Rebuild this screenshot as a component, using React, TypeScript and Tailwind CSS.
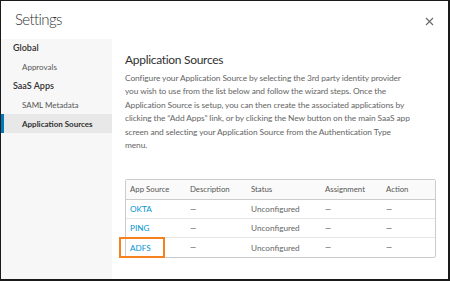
import React from "react";

const font = { fontFamily: "Lato, 'Open Sans', sans-serif" };

function NavItem({ label, sub, selected }: { label: string; sub?: boolean; selected?: boolean }) {
  return (
    <div
      className={`relative flex items-center h-[19px] ${sub ? "pl-[21px] text-[8px]" : "pl-[12px] text-[9px] font-semibold text-[#313131]"} ${
        selected ? "bg-[#e8e8e8] font-bold text-[#313131]" : sub ? "text-[#565656]" : ""
      }`}
    >
      {selected && <div className="absolute left-0 top-0 bottom-0 w-[3px] bg-[#0079b8]" />}
      {label}
    </div>
  );
}

const rows = ["OKTA", "PING", "ADFS"];

export default function App() {
  return (
    <div style={font} className="w-[450px] h-[281px] bg-white border-t border-l border-r-2 border-b-2 border-[#1a1a1a] flex flex-col overflow-hidden">
      <div className="h-[38px] shrink-0 flex items-center justify-between pl-[14px] pr-[14px]">
        <div className="text-[15px] font-light text-[#313131] leading-none tracking-[-0.6px] mt-[-1px]">Settings</div>
        <svg width="9" height="9" viewBox="0 0 9 9" className="mt-[2px] mr-[0px]">
          <path d="M1 1 L8 8 M8 1 L1 8" stroke="#666" strokeWidth="1.1" />
        </svg>
      </div>
      <div className="flex flex-1 min-h-0">
        <div className="w-[111px] shrink-0 bg-[#f7f7f7]">
          <div className="h-[18px] flex items-center pl-[12px] text-[9px] font-semibold text-[#313131]">Global</div>
          <NavItem label="Approvals" sub />
          <NavItem label="SaaS Apps" />
          <NavItem label="SAML Metadata" sub />
          <NavItem label="Application Sources" sub selected />
        </div>
        <div className="flex-1 pl-[13px] pr-[13px] pt-[13px]">
          <div className="text-[12px] leading-[16px] text-[#313131] tracking-[-0.3px]">Application Sources</div>
          <div className="mt-[4px] text-[8.4px] leading-[13.4px] tracking-[-0.1px] text-[#666] whitespace-nowrap">
            Configure your Application Source by selecting the 3rd party identity provider
            <br />
            you wish to use from the list below and follow the wizard steps. Once the
            <br />
            Application Source is setup, you can then create the associated applications by
            <br />
            clicking the “Add Apps” link, or by clicking the New button on the main SaaS app
            <br />
            screen and selecting your Application Source from the Authentication Type
            <br />
            menu.
          </div>
          <div className="relative mt-[27px] w-[311px] border border-[#ccc] rounded-[2px] text-[7.8px]">
            <div className="flex h-[20px] items-center bg-[#fafafa] border-b border-[#ccc] text-[#565656]">
              <div className="w-[59px] pl-[4px]">App Source</div>
              <div className="w-[61px] pl-[5px]">Description</div>
              <div className="w-[74px] pl-[5px]">Status</div>
              <div className="w-[61px] pl-[5px]">Assignment</div>
              <div className="flex-1 pl-[5px]">Action</div>
            </div>
            {rows.map((r, i) => (
              <div key={r} className={`flex h-[19px] items-center ${i < rows.length - 1 ? "border-b border-[#e6e6e6]" : ""}`}>
                <div className="w-[59px] pl-[4px] text-[8.2px] text-[#0094d2]">{r}</div>
                <div className="w-[61px] pl-[5px] text-[#444]">—</div>
                <div className="w-[74px] pl-[5px] text-[#666] text-[8.2px]">Unconfigured</div>
                <div className="w-[61px] pl-[5px] text-[#444]">—</div>
                <div className="flex-1 pl-[5px] text-[#444]">—</div>
              </div>
            ))}
            <div className="absolute left-[-7px] top-[57px] w-[46px] h-[21px] border-2 border-[#f5821f]" />
          </div>
        </div>
      </div>
    </div>
  );
}
